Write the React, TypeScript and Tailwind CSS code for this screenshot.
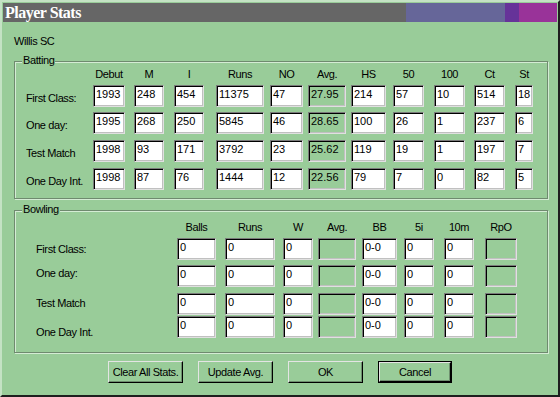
import React from "react";

const FONT = "font-['Liberation_Sans',Arial,sans-serif]";
const TXT = "text-[11px] leading-[14px] tracking-[-0.4px]";

type Col = { h: string; c: string; ro?: boolean };

const batCols: Col[] = [
  { h: "Debut", c: "w-[32px]" },
  { h: "M", c: "w-[30px] ml-[9px]" },
  { h: "I", c: "w-[30px] ml-[10px]" },
  { h: "Runs", c: "w-[48px] ml-[12px]" },
  { h: "NO", c: "w-[33px] ml-[6px]" },
  { h: "Avg.", c: "w-[38px] ml-[5px]", ro: true },
  { h: "HS", c: "w-[35px] ml-[5px]" },
  { h: "50", c: "w-[31px] ml-[7px]" },
  { h: "100", c: "w-[31px] ml-[10px]" },
  { h: "Ct", c: "w-[31px] ml-[9px]" },
  { h: "St", c: "w-[18px] ml-[10px]" },
];

const batRows = [
  { label: "First Class:", mt: "mt-[4px]", v: ["1993", "248", "454", "11375", "47", "27.95", "214", "57", "10", "514", "18"] },
  { label: "One day:", mt: "mt-[5px]", v: ["1995", "268", "250", "5845", "46", "28.65", "100", "26", "1", "237", "6"] },
  { label: "Test Match", mt: "mt-[6px]", v: ["1998", "93", "171", "3792", "23", "25.62", "119", "19", "1", "197", "7"] },
  { label: "One Day Int.", mt: "mt-[6px]", v: ["1998", "87", "76", "1444", "12", "22.56", "79", "7", "0", "82", "5"] },
];

const bowlCols: Col[] = [
  { h: "Balls", c: "w-[39px]" },
  { h: "Runs", c: "w-[50px] ml-[9px]" },
  { h: "W", c: "w-[30px] ml-[8px]" },
  { h: "Avg.", c: "w-[38px] ml-[5px]", ro: true },
  { h: "BB", c: "w-[35px] ml-[6px]" },
  { h: "5i", c: "w-[30px] ml-[7px]" },
  { h: "10m", c: "w-[30px] ml-[10px]" },
  { h: "RpO", c: "w-[32px] ml-[11px]", ro: true },
];

const bowlVals = ["0", "0", "0", "", "0-0", "0", "0", ""];
const bowlRowMt = ["mt-[4px]", "mt-[5px]", "mt-[6px]", "mt-[1px]"];
const bowlLabels = [
  { t: "First Class:", mt: "mt-[8px]" },
  { t: "One day:", mt: "mt-[10px]" },
  { t: "Test Match", mt: "mt-[16px]" },
  { t: "One Day Int.", mt: "mt-[15px]" },
];

function Field({ c, ro, v }: { c: string; ro?: boolean; v: string }) {
  return (
    <div
      className={`${c} h-[22px] shrink-0 ${ro ? "bg-[#99cc99]" : "bg-white"} border border-t-[#7a7a7a] border-l-[#7a7a7a] border-b-[#e0e0e0] border-r-[#e0e0e0] shadow-[inset_1px_1px_0_#000,inset_-1px_-1px_0_#c0c0c0] pl-[2px] pt-[1px] text-[11px] leading-[14px] text-black overflow-hidden whitespace-nowrap`}
    >
      {v}
    </div>
  );
}

function Btn({ children, def }: { children: React.ReactNode; def?: boolean }) {
  return (
    <div className={`h-[22px] ${def ? "w-[74px] border border-black" : "w-[75px]"} shrink-0`}>
      <div className={`h-full w-full border border-t-[#e4e4e4] border-l-[#e4e4e4] border-b-black border-r-black shadow-[inset_-1px_-1px_0_#6f8f6f] flex items-center justify-center whitespace-nowrap text-black ${TXT}`}>
        {children}
      </div>
    </div>
  );
}

export default function App() {
  return (
    <div
      className={`${FONT} w-[560px] h-[397px] bg-[#99cc99] border-[2px] border-t-[#c4e2c4] border-l-[#c4e2c4] border-r-[#1e1e1e] border-b-[#1e1e1e] p-[1px] text-black overflow-hidden`}
    >
      {/* Title bar */}
      <div className="flex h-[19px] w-[554px]">
        <div className="w-[403px] bg-[#666666] flex items-center pl-[2px]">
          <span className="font-['Liberation_Serif',serif] font-bold text-[16px] leading-[19px] tracking-[-0.5px] text-white">
            Player Stats
          </span>
        </div>
        <div className="w-[99px] bg-[#666699]" />
        <div className="w-[14px] bg-[#663399]" />
        <div className="flex-1 bg-[#993399]" />
      </div>

      <div className={`mt-[12px] ml-[11px] ${TXT}`}>Willis SC</div>

      {/* Batting */}
      <div className="relative mt-[13px] ml-[11px] w-[534px] h-[138px] border border-[#6f8a6f] shadow-[inset_1px_1px_0_#d4ecd4,1px_1px_0_#d4ecd4]">
        <div className={`absolute left-[7px] top-[-9px] px-[1px] bg-[#99cc99] ${TXT}`}>Batting</div>
        <div className="pt-[5px] pl-[11px]">
          <div className={`flex ${TXT}`}>
            <div className="w-[67px] shrink-0" />
            {batCols.map((col) => (
              <div key={col.h} className={`${col.c} shrink-0 text-center`}>
                {col.h}
              </div>
            ))}
          </div>
          {batRows.map((r) => (
            <div key={r.label} className={`flex items-start ${r.mt}`}>
              <div className={`w-[67px] shrink-0 mt-[6px] whitespace-nowrap ${TXT}`}>{r.label}</div>
              {batCols.map((col, i) => (
                <Field key={col.h} c={col.c} ro={col.ro} v={r.v[i]} />
              ))}
            </div>
          ))}
        </div>
      </div>

      {/* Bowling */}
      <div className="relative mt-[11px] ml-[11px] w-[534px] h-[143px] border border-[#6f8a6f] shadow-[inset_1px_1px_0_#d4ecd4,1px_1px_0_#d4ecd4]">
        <div className={`absolute left-[7px] top-[-9px] px-[1px] bg-[#99cc99] ${TXT}`}>Bowling</div>
        <div className="pt-[9px] pl-[21px]">
          <div className={`flex ${TXT}`}>
            <div className="w-[141px] shrink-0" />
            {bowlCols.map((col) => (
              <div key={col.h} className={`${col.c} shrink-0 text-center`}>
                {col.h}
              </div>
            ))}
          </div>
          <div className="flex">
            <div className="w-[141px] shrink-0 flex flex-col">
              {bowlLabels.map((l) => (
                <div key={l.t} className={`${l.mt} whitespace-nowrap ${TXT}`}>
                  {l.t}
                </div>
              ))}
            </div>
            <div className="flex flex-col">
              {bowlRowMt.map((mt, ri) => (
                <div key={ri} className={`flex ${mt}`}>
                  {bowlCols.map((col, i) => (
                    <Field key={col.h} c={col.c} ro={col.ro} v={bowlVals[i]} />
                  ))}
                </div>
              ))}
            </div>
          </div>
        </div>
      </div>

      {/* Buttons */}
      <div className="flex mt-[8px] ml-[105px] gap-[15px]">
        <Btn>Clear All Stats.</Btn>
        <Btn>Update Avg.</Btn>
        <Btn>OK</Btn>
        <Btn def>Cancel</Btn>
      </div>
    </div>
  );
}
